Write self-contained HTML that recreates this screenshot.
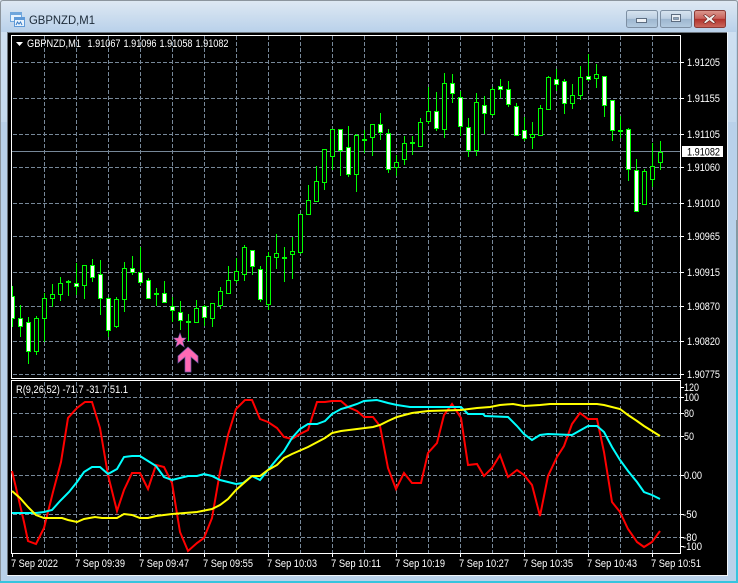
<!DOCTYPE html>
<html><head><meta charset="utf-8"><style>
html,body{margin:0;padding:0;background:#8a949c}
svg{display:block}
text{font-family:"Liberation Sans",sans-serif;font-size:11px;fill:#fff}
.g{stroke:#778899;stroke-width:1;stroke-dasharray:4 2;fill:none}
</style></head><body>
<svg width="738" height="583" viewBox="0 0 738 583" xmlns="http://www.w3.org/2000/svg">
<defs>
<linearGradient id="t" x1="0" y1="0" x2="0" y2="1"><stop offset="0" stop-color="#dfe9f3"/><stop offset="1" stop-color="#b9d1ea"/></linearGradient>
<linearGradient id="s" x1="0" y1="0" x2="0" y2="1"><stop offset="0" stop-color="#cfe0f1"/><stop offset="1" stop-color="#c4d9ee"/></linearGradient>
<linearGradient id="b" x1="0" y1="0" x2="0" y2="1"><stop offset="0" stop-color="#d8e4f0"/><stop offset=".48" stop-color="#bccfe2"/><stop offset=".5" stop-color="#9db6cf"/><stop offset="1" stop-color="#b4cbe0"/></linearGradient>
<linearGradient id="c" x1="0" y1="0" x2="0" y2="1"><stop offset="0" stop-color="#dc9a90"/><stop offset=".48" stop-color="#c8605a"/><stop offset=".5" stop-color="#b0302a"/><stop offset="1" stop-color="#cc6a5e"/></linearGradient>
<linearGradient id="e" x1="0" y1="220" x2="0" y2="400" gradientUnits="userSpaceOnUse"><stop offset="0" stop-color="#8c959d"/><stop offset="1" stop-color="#36c4de"/></linearGradient>
<clipPath id="m"><rect x="12" y="36" width="668" height="342"/></clipPath>
</defs>
<rect width="738" height="583" fill="#b9d1ea"/>
<rect x="0" y="0" width="738" height="32" fill="url(#t)"/>
<rect x="0" y="32" width="7" height="90" fill="url(#s)"/>
<rect x="728" y="32" width="8" height="90" fill="url(#s)"/>
<path d="M.5 583V3Q.5.5 3 .5H735Q737.5.5 737.5 3V220" fill="none" stroke="#8c959d"/>
<rect x="736" y="220" width="2" height="363" fill="url(#e)"/>
<rect x="0" y="581" width="738" height="2" fill="#36c4de"/>

<!-- title icon -->
<g>
<rect x="10.500" y="12.500" width="11" height="9" fill="#e8f3fd" stroke="#6fa6dc"/>
<rect x="11" y="13" width="10" height="2" fill="#6fa6dc"/>
<rect x="14.500" y="17.500" width="10" height="9" fill="#e8f3fd" stroke="#5f9ad8"/>
<rect x="15" y="18" width="9" height="2" fill="#5f9ad8"/>
<path d="M16 25l1.500-3 1.500 2 1.500-2 1.500 3" fill="none" stroke="#3a7cc4"/>
</g>
<text x="29" y="24" style="font-size:12px;fill:#1c2a38" textLength="66" lengthAdjust="spacingAndGlyphs">GBPNZD,M1</text>

<!-- buttons -->
<rect x="626.500" y="10.500" width="31" height="17" rx="2" fill="url(#b)" stroke="#7d8fa3"/>
<rect x="636.500" y="18.500" width="10" height="4" fill="#eef2f6" stroke="#5c6c80"/>
<rect x="660.500" y="10.500" width="31" height="17" rx="2" fill="url(#b)" stroke="#7d8fa3"/>
<rect x="671.500" y="14.500" width="9" height="7" fill="#e8eef4" stroke="#5c6c80"/>
<rect x="673.500" y="17.500" width="5" height="2" fill="#8ba3ba" stroke="#5c6c80" stroke-width=".6"/>
<rect x="694.500" y="10.500" width="31" height="17" rx="2" fill="url(#c)" stroke="#8a3a36"/>
<path d="M705.500 14.500l4 3 4-3 2 1-3.500 3.500 3.500 3.500-2 1-4-3-4 3-2-1 3.500-3.500-3.500-3.500z" fill="#f4f2f0" stroke="#6b2a26" stroke-width=".6"/>

<!-- client -->
<rect x="7" y="32" width="1" height="543" fill="#6c747c"/>
<rect x="7" y="32" width="720" height="1" fill="#6c747c"/>
<rect x="8" y="33" width="719" height="542" fill="#000"/>
<path d="M7 575.500H727.500V32" stroke="#f2f6fa" fill="none"/>

<!-- grid -->
<path class="g" d="M44.500 36V378M76.500 36V378M108.500 36V378M140.500 36V378M172.500 36V378M204.500 36V378M236.500 36V378M268.500 36V378M300.500 36V378M332.500 36V378M364.500 36V378M396.500 36V378M428.500 36V378M460.500 36V378M492.500 36V378M524.500 36V378M556.500 36V378M588.500 36V378M620.500 36V378M652.500 36V378"/>
<path class="g" d="M13 62.500H680M13 98.500H680M13 134.500H680M13 167.500H680M13 203.500H680M13 236.500H680M13 272.500H680M13 306.500H680M13 341.500H680M13 374.500H680"/>
<path d="M12 151.500H680" stroke="#778899" fill="none"/>

<g clip-path="url(#m)">
<!-- wicks -->
<path fill="none" stroke="#0f0" d="M12.500 286V327M20.500 305V337M28.500 317V364M36.500 316V355M44.500 293V342M52.500 284V307M60.500 277V301M68.500 280V296M76.500 263V295M84.500 265V299M92.500 259V282M100.500 260V315M108.500 297V337M116.500 297V328M124.500 262V312M132.500 256V275M140.500 247V285M148.500 278V299M156.500 288V306M164.500 281V302M172.500 297V322M180.500 301V330M188.500 314V341M196.500 300V322M204.500 305V326M212.500 303V327M220.500 287V309M228.500 266V293M236.500 258V283M244.500 245V281M252.500 250V275M260.500 266V302M268.500 252V310M276.500 234V269M284.500 247V282M292.500 237V279M300.500 214V254M308.500 185V215M316.500 166V201M324.500 149V190M332.500 129V170M340.500 129V176M348.500 126V177M356.500 134V192M364.500 130V153M372.500 124V156M380.500 113V140M388.500 129V173M396.500 155V176M404.500 136V165M412.500 136V155M420.500 118V146M428.500 87V124M436.500 92V131M444.500 73V138M452.500 74V103M460.500 91V136M468.500 118V157M476.500 93V156M484.500 96V134M492.500 87V116M500.500 79V98M508.500 81V107M516.500 103V136M524.500 117V141M532.500 122V149M540.500 105V136M548.500 76V109M556.500 69V91M564.500 79V114M572.500 84V109M580.500 66V100M588.500 54V81M596.500 64V88M604.500 76V117M612.500 100V141M620.500 116V138M628.500 128V181M636.500 159V212M644.500 169V205M652.500 143V187M660.500 141V170"/>
<!-- doji -->
<path fill="none" stroke="#0f0" stroke-width="2" d="M66 282H71M154 294H159M186 322H191M282 258H287M362 140H367M410 143H415M618 131H623"/>
<!-- black bodies -->
<path fill="#000" stroke="#0f0" d="M34.500 318.500h4V351.500h-4zM42.500 298.500h4V318.500h-4zM50.500 294.500h4V298.500h-4zM58.500 283.500h4V294.500h-4zM82.500 265.500h4V285.500h-4zM114.500 299.500h4V326.500h-4zM122.500 268.500h4V299.500h-4zM194.500 308.500h4V322.500h-4zM210.500 303.500h4V318.500h-4zM218.500 291.500h4V305.500h-4zM226.500 280.500h4V293.500h-4zM234.500 271.500h4V280.500h-4zM242.500 247.500h4V274.500h-4zM266.500 256.500h4V304.500h-4zM274.500 253.500h4V257.500h-4zM290.500 251.500h4V254.500h-4zM298.500 214.500h4V252.500h-4zM306.500 200.500h4V214.500h-4zM314.500 181.500h4V201.500h-4zM322.500 149.500h4V182.500h-4zM330.500 129.500h4V156.500h-4zM354.500 135.500h4V174.500h-4zM370.500 124.500h4V137.500h-4zM394.500 162.500h4V167.500h-4zM402.500 143.500h4V159.500h-4zM418.500 122.500h4V146.500h-4zM426.500 111.500h4V121.500h-4zM442.500 83.500h4V129.500h-4zM474.500 102.500h4V150.500h-4zM490.500 89.500h4V114.500h-4zM530.500 134.500h4V137.500h-4zM538.500 108.500h4V135.500h-4zM546.500 77.500h4V109.500h-4zM570.500 95.500h4V103.500h-4zM578.500 77.500h4V95.500h-4zM594.500 74.500h4V78.500h-4zM642.500 171.500h4V204.500h-4zM650.500 166.500h4V179.500h-4zM658.500 152.500h4V162.500h-4z"/>
<!-- white bodies -->
<path fill="#fff" stroke="#0f0" d="M10.500 296.500h4V318.500h-4zM18.500 318.500h4V326.500h-4zM26.500 322.500h4V351.500h-4zM74.500 283.500h4V286.500h-4zM90.500 265.500h4V277.500h-4zM98.500 274.500h4V298.500h-4zM106.500 298.500h4V330.500h-4zM130.500 268.500h4V272.500h-4zM138.500 272.500h4V282.500h-4zM146.500 280.500h4V298.500h-4zM162.500 293.500h4V302.500h-4zM170.500 306.500h4V310.500h-4zM178.500 312.500h4V320.500h-4zM202.500 306.500h4V317.500h-4zM250.500 250.500h4V266.500h-4zM258.500 269.500h4V299.500h-4zM338.500 129.500h4V150.500h-4zM346.500 147.500h4V174.500h-4zM378.500 124.500h4V132.500h-4zM386.500 133.500h4V169.500h-4zM434.500 111.500h4V128.500h-4zM450.500 83.500h4V93.500h-4zM458.500 97.500h4V126.500h-4zM466.500 127.500h4V150.500h-4zM482.500 105.500h4V113.500h-4zM498.500 86.500h4V89.500h-4zM506.500 89.500h4V104.500h-4zM514.500 106.500h4V135.500h-4zM522.500 130.500h4V138.500h-4zM554.500 79.500h4V84.500h-4zM562.500 81.500h4V103.500h-4zM586.500 76.500h4V79.500h-4zM602.500 76.500h4V105.500h-4zM610.500 100.500h4V130.500h-4zM626.500 129.500h4V169.500h-4zM634.500 170.500h4V211.500h-4z"/>
</g>

<!-- markers -->
<polygon points="180,333 181.800,338 186,338 182.700,341.500 184.200,347 180,343.800 175.800,347 177.300,341.500 173.500,338 178.200,338" fill="#ff69b4" stroke="#7a5ab0" stroke-width=".6"/>
<polygon points="188,347 198,356 198,363 191,357 191,372 185,372 185,357 178,363 178,356" fill="#ff69b4" stroke="#6f55a8" stroke-width=".7"/>

<!-- frames -->
<rect x="11.500" y="35.500" width="669" height="343" fill="none" stroke="#fff"/>
<rect x="11.500" y="380.500" width="669" height="173" fill="none" stroke="#fff"/>

<polygon points="16,42 23,42 19.500,46" fill="#fff"/>
<text x="27" y="47" textLength="54" lengthAdjust="spacingAndGlyphs">GBPNZD,M1</text>
<text x="87.500" y="47" textLength="33" lengthAdjust="spacingAndGlyphs">1.91067</text>
<text x="123.500" y="47" textLength="33" lengthAdjust="spacingAndGlyphs">1.91096</text>
<text x="159.500" y="47" textLength="33" lengthAdjust="spacingAndGlyphs">1.91058</text>
<text x="195.500" y="47" textLength="33" lengthAdjust="spacingAndGlyphs">1.91082</text>

<!-- price axis -->
<path d="M680 62.500h4M680 98.500h4M680 134.500h4M680 167.500h4M680 203.500h4M680 236.500h4M680 272.500h4M680 306.500h4M680 341.500h4M680 374.500h4M680 387.500h4M680 397.500h4M680 413.500h4M680 436.500h4M680 475.500h4M680 514.500h4M680 537.500h4M680 546.500h4" stroke="#fff" fill="none"/>
<g>
<text x="687" y="66" textLength="33" lengthAdjust="spacingAndGlyphs">1.91205</text>
<text x="687" y="102" textLength="33" lengthAdjust="spacingAndGlyphs">1.91155</text>
<text x="687" y="138" textLength="33" lengthAdjust="spacingAndGlyphs">1.91105</text>
<text x="687" y="171" textLength="33" lengthAdjust="spacingAndGlyphs">1.91060</text>
<text x="687" y="207" textLength="33" lengthAdjust="spacingAndGlyphs">1.91010</text>
<text x="687" y="240" textLength="33" lengthAdjust="spacingAndGlyphs">1.90965</text>
<text x="687" y="276" textLength="33" lengthAdjust="spacingAndGlyphs">1.90915</text>
<text x="687" y="310" textLength="33" lengthAdjust="spacingAndGlyphs">1.90870</text>
<text x="687" y="345" textLength="33" lengthAdjust="spacingAndGlyphs">1.90820</text>
<text x="687" y="378" textLength="33" lengthAdjust="spacingAndGlyphs">1.90775</text>
</g>
<rect x="682" y="146" width="41" height="11" fill="#fff"/>
<text x="687" y="155.500" textLength="33" lengthAdjust="spacingAndGlyphs" style="fill:#000">1.91082</text>

<text x="684" y="391" textLength="15" lengthAdjust="spacingAndGlyphs">120</text>
<text x="684" y="401" textLength="15" lengthAdjust="spacingAndGlyphs">100</text>
<text x="684" y="417" textLength="10" lengthAdjust="spacingAndGlyphs">80</text>
<text x="684" y="440" textLength="10" lengthAdjust="spacingAndGlyphs">50</text>
<text x="684" y="479" textLength="18" lengthAdjust="spacingAndGlyphs">0.00</text>
<text x="683" y="518" textLength="14" lengthAdjust="spacingAndGlyphs">-50</text>
<text x="683" y="541" textLength="14" lengthAdjust="spacingAndGlyphs">-80</text>
<text x="683" y="550" textLength="19" lengthAdjust="spacingAndGlyphs">-100</text>

<!-- lower grid -->
<path class="g" d="M44.500 382V553M76.500 382V553M108.500 382V553M140.500 382V553M172.500 382V553M204.500 382V553M236.500 382V553M268.500 382V553M300.500 382V553M332.500 382V553M364.500 382V553M396.500 382V553M428.500 382V553M460.500 382V553M492.500 382V553M524.500 382V553M556.500 382V553M588.500 382V553M620.500 382V553M652.500 382V553"/>
<path class="g" d="M13 397.500H680M13 413.500H680M13 436.500H680M13 475.500H680M13 514.500H680M13 537.500H680"/>

<text x="16" y="393" textLength="112" lengthAdjust="spacingAndGlyphs">R(9,26,52) -71.7 -31.7 51.1</text>

<!-- lines -->
<polyline fill="none" stroke="#f00" stroke-width="2" points="12,471 17,492 24,522 28,541 36,544 44,528 53,492 61,462 68,418 77,408 85,402 92,402 100,428 108,475 117,511 124,490 132,473 140,473 148,489 156,465 164,467 172,483 180,532 188,551 197,543 204,538 212,518 220,472 228,435 236,409 245,400 252,400 260,419 268,422 277,428 284,437 292,439 300,434 308,430 317,402 325,402 332,401 341,401 348,407 357,411 364,417 373,417 380,426 388,468 396,489 404,473 412,483 421,483 428,453 437,443 444,415 452,404 461,418 468,465 477,464 484,476 492,468 500,455 508,477 517,470 524,475 532,485 540,516 548,476 557,457 564,446 572,424 580,413 588,419 597,419 604,452 612,502 620,512 628,529 637,542 644,547 652,542 660,531"/>
<polyline fill="none" stroke="#0ff" stroke-width="2" points="12,513 36,513 44,512 52,510 60,501 69,492 77,482 84,472 92,467 100,467 108,474 117,469 124,457 132,456 140,456 148,461 156,466 164,477 172,480 180,478 188,476 197,476 204,474 212,476 220,480 228,482 236,484 243,483 252,476 260,480 268,470 277,459 284,451 292,438 300,429 308,424 317,424 325,421 332,414 341,409 348,407 357,404 364,401 377,400 388,403 397,405 410,407 461,407 468,414 483,414 485,416 508,417 517,426 524,434 532,440 540,435 548,434 572,435 588,426 597,426 604,432 612,447 620,460 628,471 637,482 644,492 652,495 660,499"/>
<polyline fill="none" stroke="#ff0" stroke-width="2" points="12,491 20,498 28,507 36,515 44,518 62,518 68,520 77,522 84,519 95,517 102,518 117,518 124,514 132,515 140,518 148,518 156,516 172,514 197,512 212,509 220,505 228,499 236,490 245,482 252,476 260,476 268,470 277,465 284,458 292,454 308,447 325,438 332,433 341,431 357,429 373,427 380,425 388,421 397,417 412,413 428,411 461,410 477,408 490,407 500,405 513,404 524,406 540,405 550,404 597,404 604,405 620,409 628,415 637,421 644,426 652,431 660,436"/>

<!-- time axis -->
<path d="M12.500 553v4M76.500 553v4M140.500 553v4M204.500 553v4M268.500 553v4M332.500 553v4M396.500 553v4M460.500 553v4M524.500 553v4M588.500 553v4M652.500 553v4" stroke="#fff" fill="none"/>
<g>
<text x="11" y="567" textLength="47" lengthAdjust="spacingAndGlyphs">7 Sep 2022</text>
<text x="75" y="567" textLength="50" lengthAdjust="spacingAndGlyphs">7 Sep 09:39</text>
<text x="139" y="567" textLength="50" lengthAdjust="spacingAndGlyphs">7 Sep 09:47</text>
<text x="203" y="567" textLength="50" lengthAdjust="spacingAndGlyphs">7 Sep 09:55</text>
<text x="267" y="567" textLength="50" lengthAdjust="spacingAndGlyphs">7 Sep 10:03</text>
<text x="331" y="567" textLength="50" lengthAdjust="spacingAndGlyphs">7 Sep 10:11</text>
<text x="395" y="567" textLength="50" lengthAdjust="spacingAndGlyphs">7 Sep 10:19</text>
<text x="459" y="567" textLength="50" lengthAdjust="spacingAndGlyphs">7 Sep 10:27</text>
<text x="523" y="567" textLength="50" lengthAdjust="spacingAndGlyphs">7 Sep 10:35</text>
<text x="587" y="567" textLength="50" lengthAdjust="spacingAndGlyphs">7 Sep 10:43</text>
<text x="651" y="567" textLength="50" lengthAdjust="spacingAndGlyphs">7 Sep 10:51</text>
</g>
</svg>
</body></html>
